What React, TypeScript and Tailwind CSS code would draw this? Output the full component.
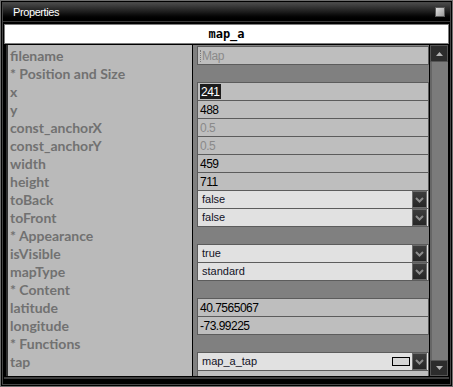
import React from "react";

type Row = {
  label: string;
  kind: "section" | "text" | "select" | "tap";
  value?: string;
  muted?: boolean;
  selected?: boolean;
  caret?: boolean;
};

const rows: Row[] = [
  { label: "filename", kind: "text", value: "Map", muted: true, caret: true },
  { label: "* Position and Size", kind: "section" },
  { label: "x", kind: "text", value: "241", selected: true },
  { label: "y", kind: "text", value: "488" },
  { label: "const_anchorX", kind: "text", value: "0.5", muted: true },
  { label: "const_anchorY", kind: "text", value: "0.5", muted: true },
  { label: "width", kind: "text", value: "459" },
  { label: "height", kind: "text", value: "711" },
  { label: "toBack", kind: "select", value: "false" },
  { label: "toFront", kind: "select", value: "false" },
  { label: "* Appearance", kind: "section" },
  { label: "isVisible", kind: "select", value: "true" },
  { label: "mapType", kind: "select", value: "standard" },
  { label: "* Content", kind: "section" },
  { label: "latitude", kind: "text", value: "40.7565067" },
  { label: "longitude", kind: "text", value: "-73.99225" },
  { label: "* Functions", kind: "section" },
  { label: "tap", kind: "tap", value: "map_a_tap" },
  { label: "", kind: "text", value: "" },
];

const fieldFont = { fontFamily: '"Liberation Sans", Arial, sans-serif' };

function DropButton() {
  return (
    <div className="w-[15px] h-[17px] shrink-0 bg-gradient-to-b from-[#3c3c3c] to-[#262626] border border-[#6a6a6a] flex items-center justify-center">
      <svg width="9" height="6" viewBox="0 0 9 6">
        <path d="M1 1 L4.5 4.5 L8 1" stroke="#8c8c8c" strokeWidth="2" fill="none" />
      </svg>
    </div>
  );
}

function Field({ row }: { row: Row }) {
  if (row.kind === "section") return null;
  if (row.kind === "text") {
    return (
      <div
        className="w-[232px] h-[19px] bg-[#bebebe] border border-[#5c5c5c] flex items-center pl-[2px] text-[12px] tracking-[-0.5px] leading-none"
        style={fieldFont}
      >
        {row.caret && <span className="w-px h-[12px] border-l border-dotted border-[#7a7a7a] mr-px" />}
        {row.selected ? (
          <span className="bg-[#1c1c1c] text-white px-px h-[15px] flex items-center">{row.value}</span>
        ) : (
          <span className={row.muted ? "text-[#8a8a8a]" : "text-black"}>{row.value}</span>
        )}
      </div>
    );
  }
  return (
    <div
      className="w-[232px] h-[19px] bg-[#e1e1e1] border border-[#5c5c5c] flex items-center pl-[4px] pr-px text-[11px] text-[#121226] leading-none"
      style={fieldFont}
    >
      <span className="flex-1">{row.value}</span>
      {row.kind === "tap" && (
        <span className="w-[18px] h-[9px] bg-[#d6d6d6] border border-black mr-[2px]" />
      )}
      <DropButton />
    </div>
  );
}

export default function App() {
  return (
    <div className="w-[453px] h-[387px] bg-black border border-[#6e6e6e] p-px overflow-hidden">
      <div className="w-full h-full border border-[#474747] bg-black flex flex-col">
        {/* Title bar */}
        <div className="h-[19px] shrink-0 bg-gradient-to-b from-[#4a4a4a] via-[#1c1c1c] to-[#000000] border-b border-[#3a3a3a] flex items-center pl-[10px] pr-[5px]">
          <span
            className="text-white text-[11px] tracking-[-0.4px] flex-1"
            style={{ fontFamily: '"Liberation Sans", Arial, sans-serif' }}
          >
            Properties
          </span>
          <span className="w-[10px] h-[10px] border border-[#5a5a5a] bg-gradient-to-br from-[#e0e0e0] to-[#9a9a9a]" />
        </div>
        {/* Header */}
        <div className="mt-[2px] mx-px h-[20px] shrink-0 bg-white border border-[#7c7c7c] flex items-center justify-center">
          <span
            className="text-black text-[12px] font-bold leading-none"
            style={{ fontFamily: '"DejaVu Sans Mono", monospace' }}
          >
            map_a
          </span>
        </div>
        {/* Content */}
        <div className="mt-px ml-[3px] mr-[2px] h-[331px] shrink-0 flex border-l-2 border-[#2e2e2e] overflow-hidden">
          {/* Labels */}
          <div className="w-[184px] shrink-0 bg-[#bababa] pt-px flex flex-col">
            {rows.map((r, i) => (
              <div
                key={i}
                className="h-[18px] shrink-0 flex items-center pl-[2px] pt-px text-[14px] font-bold text-[#717171] leading-none whitespace-nowrap"
                style={{ fontFamily: "Lato, sans-serif" }}
              >
                {r.label}
              </div>
            ))}
          </div>
          <div className="w-px shrink-0 bg-black" />
          {/* Values */}
          <div className="w-[236px] shrink-0 bg-[#808080] pt-px pl-[4px] flex flex-col">
            {rows.map((r, i) => (
              <div key={i} className="h-[18px] shrink-0 flex items-start">
                <Field row={r} />
              </div>
            ))}
          </div>
          <div className="w-px shrink-0 bg-black" />
          {/* Scrollbar */}
          <div className="w-[18px] shrink-0 flex flex-col bg-[#7b7b7b] border-l-2 border-[#666666]">
            <div className="-ml-[2px] w-[18px] h-[17px] shrink-0 bg-[#2c2c2c] border border-[#555555] flex items-center justify-center">
              <svg width="7" height="4" viewBox="0 0 7 4">
                <path d="M0 4 L3.5 0 L7 4 Z" fill="#b4b4b4" />
              </svg>
            </div>
            <div className="flex-1" />
            <div className="-ml-[2px] w-[18px] h-[16px] shrink-0 bg-[#2c2c2c] border border-[#555555] flex items-center justify-center">
              <svg width="7" height="4" viewBox="0 0 7 4">
                <path d="M0 0 L3.5 4 L7 0 Z" fill="#b4b4b4" />
              </svg>
            </div>
          </div>
        </div>
        {/* Bottom frame */}
        <div className="mx-px mt-px h-[2px] bg-[#3e3e3e]" />
      </div>
    </div>
  );
}
